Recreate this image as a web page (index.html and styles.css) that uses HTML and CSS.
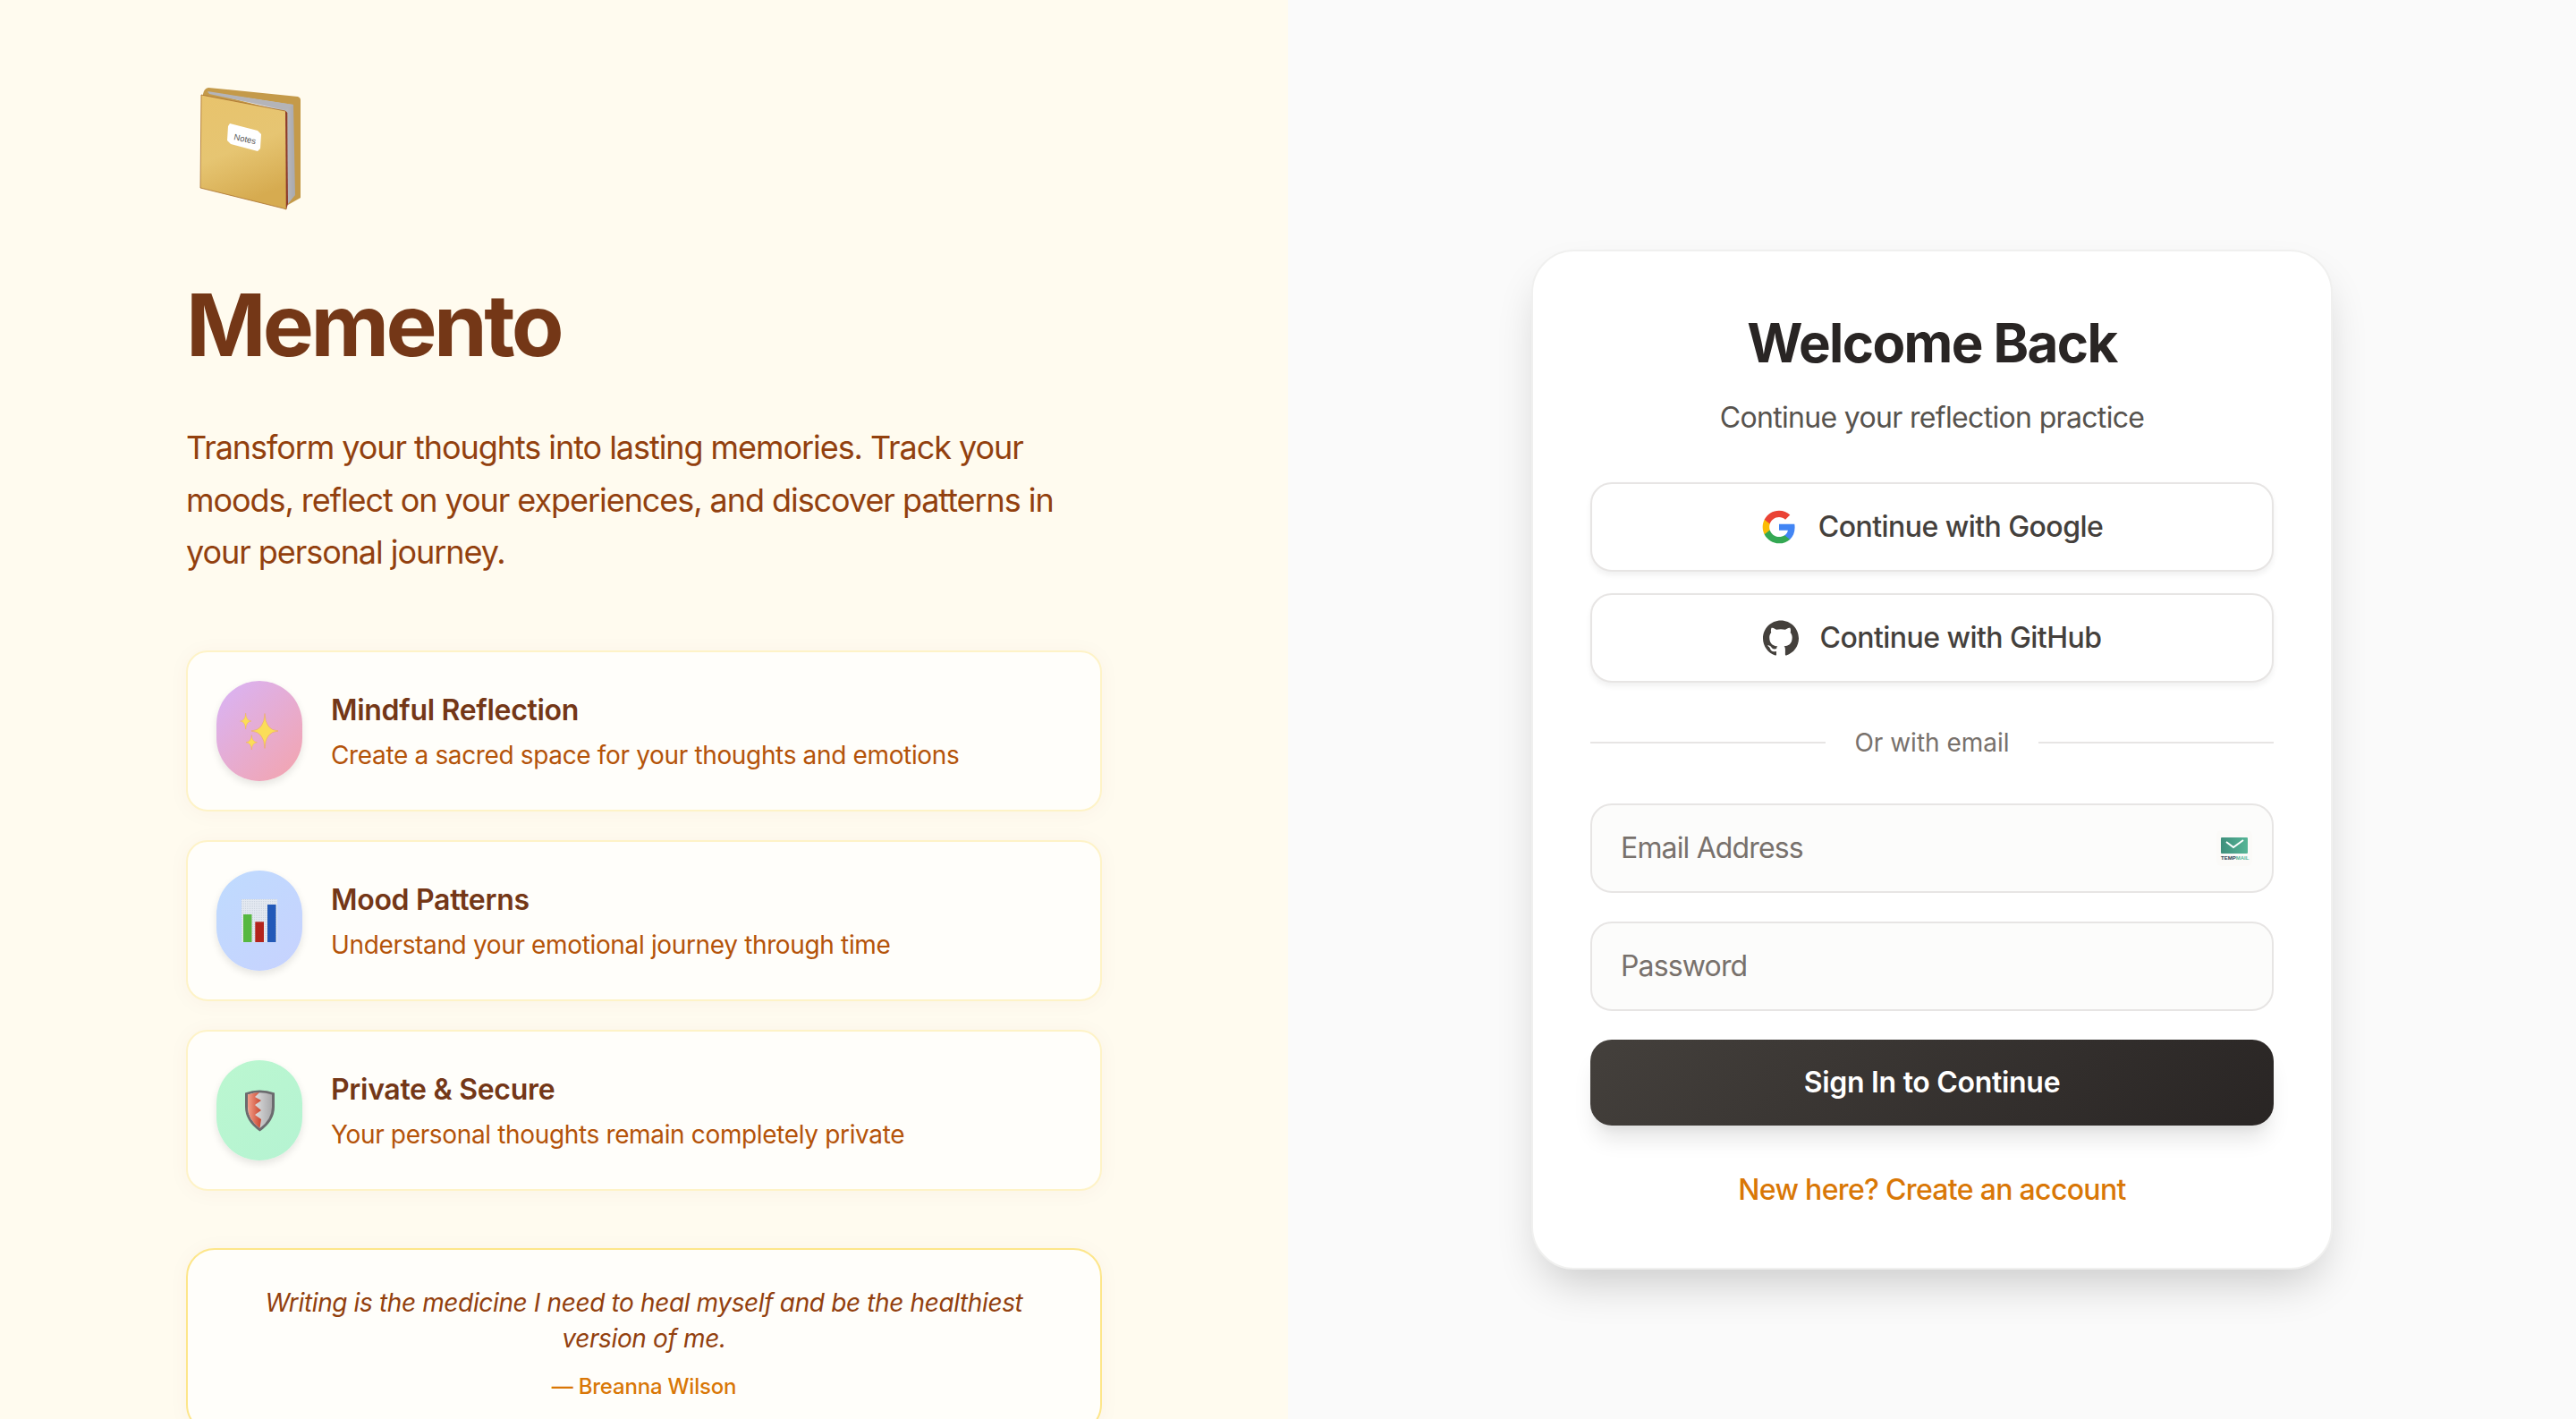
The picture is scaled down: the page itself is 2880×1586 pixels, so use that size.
FILE: index.html
```html
<!DOCTYPE html>
<html lang="en">
<head>
    <meta charset="UTF-8">
    <meta name="viewport" content="width=device-width, initial-scale=1.0">
    <title>Memento</title>
    <link rel="stylesheet" href="styles.css">
</head>
<body>
<main class="split">
    <section class="intro">
        <svg class="logo" viewBox="0 0 144 144" aria-hidden="true">
            <defs>
                <linearGradient id="bookFront" x1="0" y1="0" x2="0.3" y2="1">
                    <stop offset="0" stop-color="#e8c36c"/>
                    <stop offset="0.55" stop-color="#e6c572"/>
                    <stop offset="1" stop-color="#d6ab50"/>
                </linearGradient>
                <linearGradient id="bookPages" x1="0" y1="0" x2="1" y2="0">
                    <stop offset="0" stop-color="#c9c9cd"/>
                    <stop offset="0.5" stop-color="#f4f4f6"/>
                    <stop offset="1" stop-color="#a9a9ae"/>
                </linearGradient>
            </defs>
            <path d="M19 9 Q20 3 25 2 L125 12 Q128 13 128 16 L128 125 L114 133 L19 20 Z" fill="#c49a4a"/>
            <path d="M23 7 L120 21 L122 122 L113 133 L111 29 Z" fill="url(#bookPages)"/>
            <path d="M24 6 L120 21 L111 27 L26 9 Z" fill="#b4b4b9"/>
            <path d="M17 10 L111 28 L113 30 L112 138 L109 137 L16 114 Z" fill="url(#bookFront)" stroke="#a8702f" stroke-width="0.8"/>
            <path d="M111 28 L113 30 L114 132 L112 138 Z" fill="#8c3a2c"/>
            <path d="M49 42 L80 50 L84 54 L83 70 L80 73 L50 65 L46 61 L47 45 Z" fill="#ffffff"/>
            <text class="logo-label" x="53" y="60" transform="rotate(12 53 60)">Notes</text>
        </svg>
        <h1 class="brand">Memento</h1>
        <p class="lead">Transform your thoughts into lasting memories. Track your moods, reflect on your experiences, and discover patterns in your personal journey.</p>

        <div class="features">
            <div class="feature">
                <div class="feature-icon icon-purple">
                    <svg class="emoji" viewBox="0 0 48 48" aria-hidden="true">
                        <path d="M30 4.500 Q30.500 23 45 24 Q30.500 25 30 43.500 Q29.500 25 15 24 Q29.500 23 30 4.500 Z" fill="#fbdd58" stroke="#eda92f" stroke-width="0.4"/>
                        <path d="M8.700 4 Q9.200 12.500 15 13 Q9.200 13.500 8.700 22 Q8.200 13.500 2.500 13 Q8.200 12.500 8.700 4 Z" fill="#fbdd58" stroke="#eda92f" stroke-width="0.3"/>
                        <path d="M15.300 28.500 Q15.800 36.200 21.500 36.700 Q15.800 37.200 15.300 45 Q14.800 37.200 9 36.700 Q14.800 36.200 15.300 28.500 Z" fill="#fbdd58" stroke="#eda92f" stroke-width="0.3"/>
                    </svg>
                </div>
                <div class="feature-text">
                    <h3>Mindful Reflection</h3>
                    <p>Create a sacred space for your thoughts and emotions</p>
                </div>
            </div>
            <div class="feature">
                <div class="feature-icon icon-blue">
                    <svg class="emoji" viewBox="0 0 48 48" aria-hidden="true">
                        <defs>
                            <pattern id="chartGrid" width="2" height="2" patternUnits="userSpaceOnUse">
                                <rect width="2" height="2" fill="#e4e9f1"/>
                                <rect width="1" height="1" fill="#cdd5e0"/>
                            </pattern>
                        </defs>
                        <rect x="4" y="0" width="40" height="48" fill="url(#chartGrid)"/>
                        <rect x="6" y="17" width="9.500" height="31" fill="#57b840"/>
                        <rect x="19.300" y="25.300" width="9.700" height="22.700" fill="#b3241c"/>
                        <rect x="33" y="6" width="9.500" height="42" fill="#2259b8"/>
                    </svg>
                </div>
                <div class="feature-text">
                    <h3>Mood Patterns</h3>
                    <p>Understand your emotional journey through time</p>
                </div>
            </div>
            <div class="feature">
                <div class="feature-icon icon-green">
                    <svg class="emoji" viewBox="0 0 48 48" aria-hidden="true">
                        <defs>
                            <linearGradient id="shieldRed" x1="0" y1="0" x2="1" y2="0">
                                <stop offset="0" stop-color="#f3a08a"/>
                                <stop offset="1" stop-color="#c9452f"/>
                            </linearGradient>
                            <linearGradient id="shieldSilver" x1="0" y1="0" x2="1" y2="0">
                                <stop offset="0" stop-color="#f2f2f2"/>
                                <stop offset="1" stop-color="#a9a9ab"/>
                            </linearGradient>
                        </defs>
                        <path d="M8 4.500 Q24 -1.500 41 4.500 L41 20 Q41 36 24.500 47.500 Q8 36 8 20 Z" fill="#6b6b6e"/>
                        <path d="M11 6.500 Q24 2 38 6.500 L38 20 Q38 34 24.500 44 Q11 34 11 20 Z" fill="url(#shieldSilver)"/>
                        <path d="M11 6.500 Q18 4 24 4 L19 9 L26 13 L19 18 L26 24 L19 29 L26 34 L24.500 44 Q11 34 11 20 Z" fill="url(#shieldRed)"/>
                    </svg>
                </div>
                <div class="feature-text">
                    <h3>Private &amp; Secure</h3>
                    <p>Your personal thoughts remain completely private</p>
                </div>
            </div>
        </div>

        <blockquote class="quote">
            <p>Writing is the medicine I need to heal myself and be the healthiest version of me.</p>
            <cite>— Breanna Wilson</cite>
        </blockquote>
    </section>

    <section class="auth">
        <div class="card">
            <h2 class="card-title">Welcome Back</h2>
            <p class="card-sub">Continue your reflection practice</p>

            <div class="socials">
                <button class="social-btn" type="button">
                    <svg class="social-icon" viewBox="0 0 24 24" aria-hidden="true">
                        <path fill="#4285F4" d="M22.560 12.250c0-.780-.070-1.530-.200-2.250H12v4.260h5.920c-.260 1.370-1.040 2.530-2.210 3.310v2.770h3.570c2.080-1.920 3.280-4.740 3.280-8.090z"/>
                        <path fill="#34A853" d="M12 23c2.970 0 5.460-.980 7.280-2.660l-3.570-2.770c-.980.660-2.230 1.060-3.710 1.060-2.860 0-5.290-1.930-6.160-4.530H2.180v2.840C3.990 20.530 7.700 23 12 23z"/>
                        <path fill="#FBBC05" d="M5.840 14.090c-.220-.660-.350-1.360-.350-2.090s.130-1.430.350-2.090V7.070H2.180C1.430 8.550 1 10.220 1 12s.430 3.450 1.180 4.930l2.850-2.220.810-.620z"/>
                        <path fill="#EA4335" d="M12 5.380c1.620 0 3.060.560 4.210 1.640l3.150-3.150C17.450 2.090 14.970 1 12 1 7.700 1 3.990 3.470 2.180 7.070l3.660 2.840c.870-2.600 3.300-4.530 6.160-4.530z"/>
                    </svg>
                    Continue with Google
                </button>
                <button class="social-btn" type="button">
                    <svg class="social-icon" viewBox="0 0 24 24" aria-hidden="true">
                        <path fill="#44403c" d="M12 .297c-6.630 0-12 5.373-12 12 0 5.303 3.438 9.800 8.205 11.385.600.113.820-.258.820-.577 0-.285-.010-1.040-.015-2.040-3.338.724-4.042-1.610-4.042-1.610C4.422 18.070 3.633 17.700 3.633 17.700c-1.087-.744.084-.729.084-.729 1.205.084 1.838 1.236 1.838 1.236 1.070 1.835 2.809 1.305 3.495.998.108-.776.417-1.305.760-1.605-2.665-.300-5.466-1.332-5.466-5.930 0-1.310.465-2.380 1.235-3.220-.135-.303-.540-1.523.105-3.176 0 0 1.005-.322 3.300 1.230.960-.267 1.980-.399 3-.405 1.020.006 2.040.138 3 .405 2.280-1.552 3.285-1.230 3.285-1.230.645 1.653.240 2.873.120 3.176.765.840 1.230 1.910 1.230 3.220 0 4.610-2.805 5.625-5.475 5.920.420.360.810 1.096.810 2.220 0 1.606-.015 2.896-.015 3.286 0 .315.210.690.825.570C20.565 22.092 24 17.592 24 12.297c0-6.627-5.373-12-12-12"/>
                    </svg>
                    Continue with GitHub
                </button>
            </div>

            <div class="divider"><span>Or with email</span></div>

            <form class="login-form">
                <div class="field">
                    <input class="input" type="email" placeholder="Email Address">
                    <svg class="mail-badge" viewBox="0 0 40 40" aria-hidden="true">
                        <defs>
                            <linearGradient id="mailGreen" x1="0" y1="0" x2="1" y2="0">
                                <stop offset="0" stop-color="#3f8f7c"/>
                                <stop offset="1" stop-color="#56b596"/>
                            </linearGradient>
                        </defs>
                        <rect width="40" height="40" rx="6" fill="#fbfaf8"/>
                        <rect x="5" y="8" width="30" height="18" rx="1" fill="url(#mailGreen)"/>
                        <path d="M11 13 L19 19 L30 11" fill="none" stroke="#ffffff" stroke-width="2"/>
                        <text class="mail-label" x="5" y="33">TEMP<tspan class="mail-label-accent">MAIL</tspan></text>
                    </svg>
                </div>
                <input class="input" type="password" placeholder="Password">
                <button class="submit-btn" type="button">Sign In to Continue</button>
            </form>

            <a class="signup-link" href="#">New here? Create an account</a>
        </div>
    </section>
</main>
</body>
</html>
```

FILE: styles.css
```css
* {
    box-sizing: border-box;
}

html, body {
    height: 100%;
    overflow: hidden;
}

body {
    margin: 0;
    font-family: Inter, "Liberation Sans", sans-serif;
    background-color: #fafafa;
}

.split {
    display: grid;
    grid-template-columns: 1440px 1440px;
}

/* left column */
.intro {
    background-color: #fffbef;
    padding: 96px 208px;
}

.logo {
    display: block;
    width: 144px;
    height: 144px;
}

.logo-label {
    font-family: "Liberation Sans", sans-serif;
    font-size: 9.500px;
    fill: #555555;
}

.brand {
    margin: 75px 0 60px;
    font-size: 96px;
    line-height: 96px;
    font-weight: 700;
    letter-spacing: -3.600px;
    color: #743717;
}

.lead {
    margin: 0 0 80px;
    font-size: 36px;
    line-height: 58.500px;
    letter-spacing: -1.060px;
    color: #92400e;
}

.features {
    display: flex;
    flex-direction: column;
    gap: 32px;
    margin-bottom: 64px;
}

.feature {
    display: flex;
    align-items: center;
    gap: 32px;
    padding: 32px;
    background-color: #fffefa;
    border: 2px solid #fef3c7;
    border-radius: 24px;
    box-shadow: 0 2px 24px rgba(120, 53, 15, 0.04);
}

.feature-icon {
    display: flex;
    align-items: center;
    justify-content: center;
    flex-shrink: 0;
    width: 96px;
    height: 112px;
    border-radius: 48px;
    box-shadow: 0 4px 8px rgba(0, 0, 0, 0.1);
}

.icon-purple {
    background: linear-gradient(135deg, #d8b4f8, #f4a4ac);
}

.icon-blue {
    background: linear-gradient(135deg, #bfdbfe, #c7d2fe);
}

.icon-green {
    background: linear-gradient(135deg, #bbf7d0, #b5f3d2);
}

.emoji {
    width: 48px;
    height: 48px;
}

.feature-text h3 {
    margin: 0 0 6px;
    font-size: 32px;
    line-height: 48px;
    font-weight: 600;
    letter-spacing: -0.300px;
    color: #743717;
}

.feature-text p {
    margin: 0;
    font-size: 28px;
    line-height: 40px;
    letter-spacing: -0.350px;
    color: #b45309;
}

.quote {
    margin: 0;
    padding: 39px 48px 34px;
    text-align: center;
    background-color: #fffefa;
    border: 2px solid #fde68a;
    border-radius: 32px;
    box-shadow: 0 2px 24px rgba(120, 53, 15, 0.04);
}

.quote p {
    margin: 0 0 18px;
    font-size: 28px;
    line-height: 40px;
    font-style: italic;
    letter-spacing: -0.370px;
    color: #92400e;
}

.quote cite {
    display: block;
    font-size: 24px;
    line-height: 32px;
    font-style: normal;
    font-weight: 500;
    letter-spacing: -0.200px;
    color: #d97706;
}

/* right column */
.auth {
    display: flex;
    align-items: center;
    justify-content: center;
}

.card {
    width: 896px;
    padding: 64px 64px 63px;
    text-align: center;
    background-color: #fff;
    border: 2px solid #f0f0ef;
    border-radius: 48px;
    box-shadow: 0 25px 50px -12px rgba(0, 0, 0, 0.2);
}

.card-title {
    margin: 0 0 22px;
    font-size: 60px;
    line-height: 76px;
    font-weight: 700;
    letter-spacing: -1.600px;
    color: #292524;
}

.card-sub {
    margin: 0 0 48px;
    font-size: 32px;
    line-height: 48px;
    letter-spacing: -0.670px;
    color: #57534e;
}

.socials {
    display: flex;
    flex-direction: column;
    gap: 24px;
}

.social-btn {
    display: flex;
    align-items: center;
    justify-content: center;
    gap: 24px;
    height: 100px;
    font-family: inherit;
    font-size: 32px;
    font-weight: 500;
    letter-spacing: -0.550px;
    color: #44403c;
    background-color: #fff;
    border: 2px solid #e7e5e4;
    border-radius: 24px;
    box-shadow: 0 4px 6px rgba(0, 0, 0, 0.06);
}

.social-icon {
    width: 40px;
    height: 40px;
}

.divider {
    display: flex;
    align-items: center;
    gap: 32px;
    margin: 47px 0 48px;
    font-size: 28px;
    line-height: 40px;
    color: #78716c;
}

.divider::before, .divider::after {
    content: "";
    flex: 1;
    height: 2px;
    background-color: #e7e5e4;
}

.login-form {
    display: flex;
    flex-direction: column;
    gap: 32px;
}

.field {
    position: relative;
}

.input {
    display: block;
    width: 100%;
    height: 100px;
    padding: 0 32px;
    font-family: inherit;
    font-size: 32px;
    letter-spacing: -0.850px;
    color: #292524;
    background-color: #fcfcfb;
    border: 2px solid #e7e5e4;
    border-radius: 24px;
}

.input::placeholder {
    color: #78716c;
}

.mail-badge {
    position: absolute;
    top: 30px;
    right: 24px;
    width: 40px;
    height: 40px;
}

.mail-label {
    font-family: "Liberation Sans", sans-serif;
    font-size: 6px;
    font-weight: 700;
    fill: #1f3b4d;
}

.mail-label-accent {
    fill: #56b596;
}

.submit-btn {
    height: 96px;
    font-family: inherit;
    font-size: 32px;
    font-weight: 600;
    letter-spacing: -0.300px;
    color: #fff;
    background: linear-gradient(135deg, #44403c, #292524);
    border: none;
    border-radius: 24px;
    box-shadow: 0 20px 25px -5px rgba(0, 0, 0, 0.1), 0 10px 10px -5px rgba(0, 0, 0, 0.04);
}

.signup-link {
    display: block;
    margin-top: 48px;
    font-size: 32px;
    line-height: 48px;
    font-weight: 500;
    letter-spacing: -0.680px;
    color: #d97706;
    text-decoration: none;
}
```
